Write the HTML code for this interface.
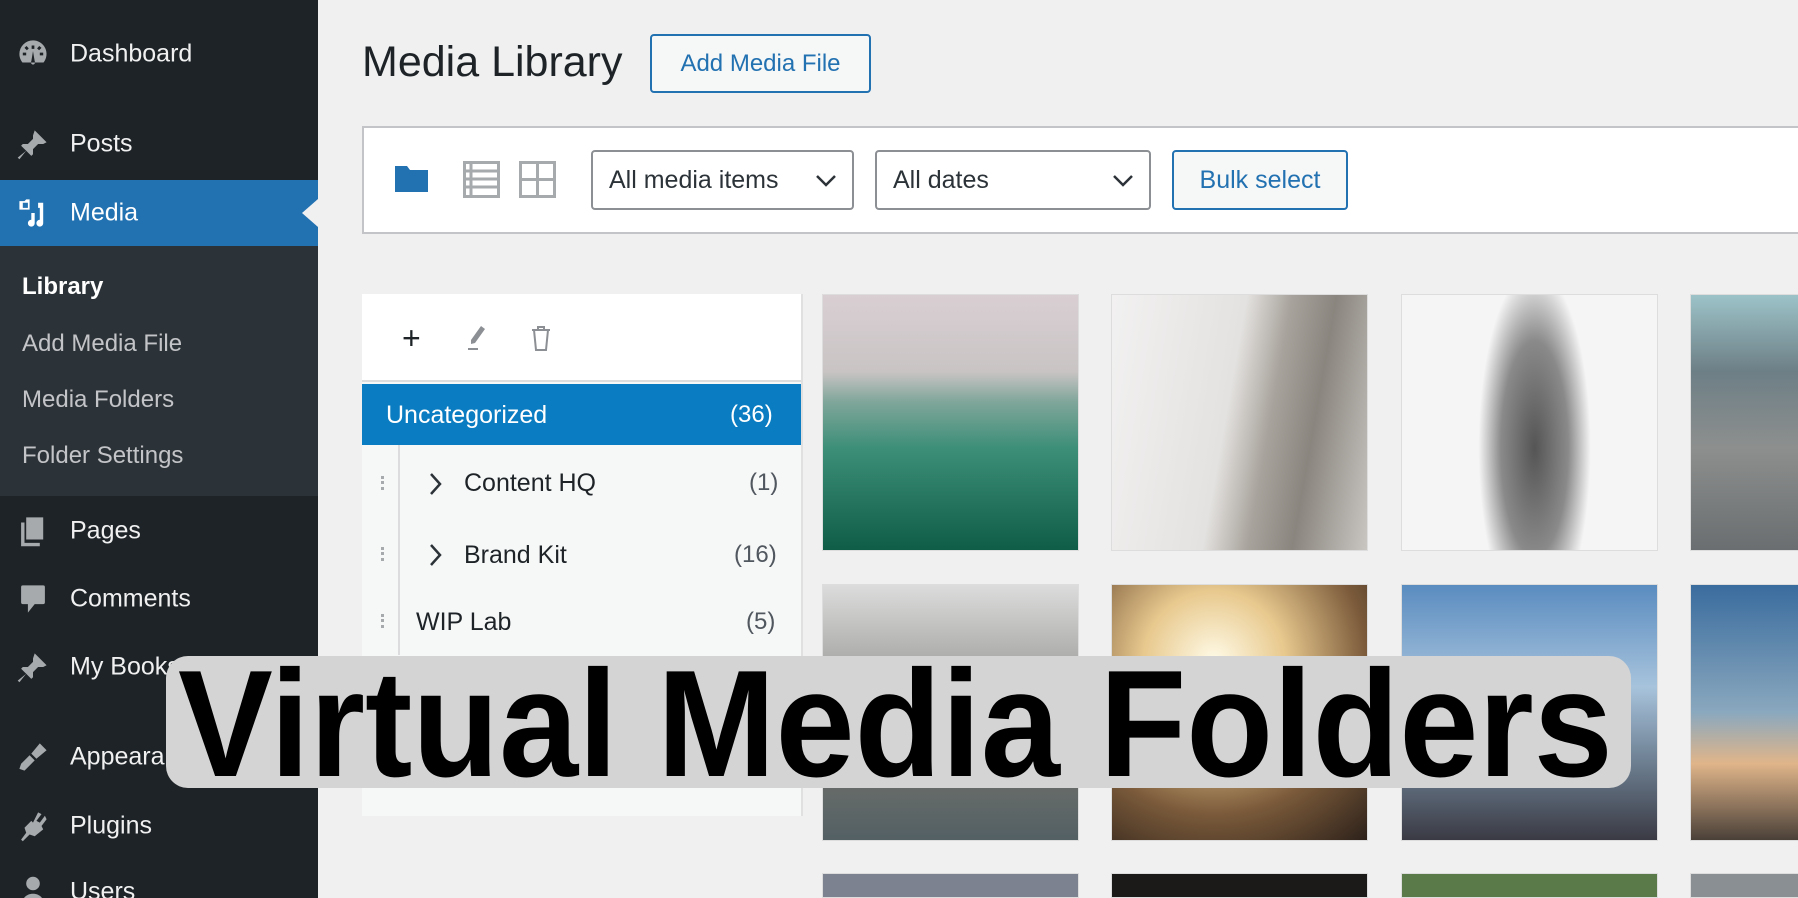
<!DOCTYPE html>
<html><head><meta charset="utf-8"><style>
*{margin:0;padding:0;box-sizing:border-box}
html,body{width:1798px;height:898px;overflow:hidden}
body{background:#f0f0f1;font-family:"Liberation Sans",sans-serif;position:relative}
.sb{position:absolute;left:0;top:0;width:318px;height:898px;background:#1d2327}
.it{position:absolute;left:70px;color:#f0f0f1;font-size:25px;transform:translateY(-50%)}
.ic{position:absolute;left:16px;width:34px;height:34px;transform:translateY(-50%)}
.sub{position:absolute;left:0;top:246px;width:318px;height:250px;background:#2c3338}
.si{position:absolute;left:22px;color:#c3c4c7;font-size:24px;transform:translateY(-50%)}
.abs{position:absolute}
.img{position:absolute;width:257px;height:257px;border:1px solid #ddd}
</style></head><body>
<div class="sb">
 <svg class="ic" style="top:54px" viewBox="0 0 20 20"><path fill="#a7aaad" d="M10 2a8 8 0 0 0-8 8c0 2 .7 3.6 1.8 5h12.4A8 8 0 0 0 10 2zm-.8 3h1.6v2H9.2zM5 6.4l1.2-1.1 1.3 1.4-1.1 1.1zM4 10.8v-1.6h2v1.6zm5 3.5 1-6 1 6a1.2 1.2 0 1 1-2 0zm5-5.1h2v1.6h-2zm-1.6-2.5 1.3-1.4L15 6.4l-1.4 1.4z"/></svg>
 <div class="it" style="top:54px">Dashboard</div>
 <svg class="ic" style="top:144px" viewBox="0 0 20 20"><path fill="#a7aaad" d="M11 2l7 7-2 1-3 0-3 3v3l-1 1-3-3-4 5-1-1 5-4-3-3 1-1h3l3-3V5z"/></svg>
 <div class="it" style="top:144px">Posts</div>
 <div class="abs" style="left:0;top:180px;width:318px;height:66px;background:#2271b1"></div>
 <div class="abs" style="left:302px;top:199px;width:0;height:0;border-top:14px solid transparent;border-bottom:14px solid transparent;border-right:16px solid #f0f0f1"></div>
 <svg class="ic" style="top:213px" viewBox="0 0 20 20"><path fill="#fff" d="M2 3h3l1-1h2v6H2zm2 1v3h3V4zm9 0h3v12a2 2 0 1 1-2-2V7h-1zM9 10h2v6a2 2 0 1 1-2-2z"/></svg>
 <div class="it" style="top:213px;color:#fff">Media</div>
 <div class="sub"></div>
 <div class="si" style="top:287px;color:#fff;font-weight:bold">Library</div>
 <div class="si" style="top:344px">Add Media File</div>
 <div class="si" style="top:400px">Media Folders</div>
 <div class="si" style="top:456px">Folder Settings</div>
 <svg class="ic" style="top:531px" viewBox="0 0 20 20"><path fill="#a7aaad" d="M6 2h10v13H6zM3 5h2v12h9v2H3z"/></svg>
 <div class="it" style="top:531px">Pages</div>
 <svg class="ic" style="top:599px" viewBox="0 0 20 20"><path fill="#a7aaad" d="M4 2h12a1 1 0 0 1 1 1v9a1 1 0 0 1-1 1h-5l-4 5v-5H4a1 1 0 0 1-1-1V3a1 1 0 0 1 1-1z"/></svg>
 <div class="it" style="top:599px">Comments</div>
 <svg class="ic" style="top:667px" viewBox="0 0 20 20"><path fill="#a7aaad" d="M11 2l7 7-2 1-3 0-3 3v3l-1 1-3-3-4 5-1-1 5-4-3-3 1-1h3l3-3V5z"/></svg>
 <div class="it" style="top:667px">My Books</div>
 <svg class="ic" style="top:757px" viewBox="0 0 20 20"><path fill="#a7aaad" d="M14 2l4 4-6 5-3-3zM8 9l3 3-4 4-2 2-3-1 1-3z"/></svg>
 <div class="it" style="top:757px">Appearance</div>
 <svg class="ic" style="top:826px" viewBox="0 0 20 20"><path fill="#a7aaad" d="M13 2l2 1-3 4 2 1 3-4 1 2-3 4 1 2-5 4-3-1-4 4-1-1 3-4-1-3 4-4 1 1z"/></svg>
 <div class="it" style="top:826px">Plugins</div>
 <svg class="ic" style="top:892px" viewBox="0 0 20 20"><circle cx="10" cy="5" r="4" fill="#a7aaad"/><path fill="#a7aaad" d="M3 19c0-5 3-8 7-8s7 3 7 8z"/></svg>
 <div class="it" style="top:892px">Users</div>
</div>

<div class="abs" style="left:362px;top:38px;font-size:43px;color:#1d2327">Media Library</div>
<div class="abs" style="left:650px;top:34px;width:221px;height:59px;border:2px solid #2271b1;border-radius:4px;background:#f6f7f7;color:#2271b1;font-size:24px;line-height:55px;text-align:center">Add Media File</div>

<div class="abs" style="left:362px;top:126px;width:1440px;height:108px;background:#fff;border:2px solid #c3c4c7"></div>
<svg class="abs" style="left:393px;top:164px" width="37" height="30" viewBox="0 0 37 30"><path fill="#2271b1" d="M2 2h12l3 4h18v22H2z"/></svg>
<svg class="abs" style="left:463px;top:161px" width="37" height="37" viewBox="0 0 37 37"><rect x="1.5" y="1.5" width="34" height="34" fill="none" stroke="#a7aaad" stroke-width="3"/><path stroke="#a7aaad" stroke-width="3" d="M2 10h33M2 18h33M2 26h33M8 2v33"/></svg>
<svg class="abs" style="left:519px;top:161px" width="37" height="37" viewBox="0 0 37 37"><rect x="1.5" y="1.5" width="34" height="34" fill="none" stroke="#a7aaad" stroke-width="3"/><path stroke="#a7aaad" stroke-width="3" d="M18.5 2v33M2 18.5h33"/></svg>
<div class="abs" style="left:591px;top:150px;width:263px;height:60px;border:2px solid #8c8f94;border-radius:4px;background:#fff;font-size:25px;color:#2c3338;line-height:56px;padding-left:16px">All media items</div>
<svg class="abs" style="left:815px;top:174px" width="22" height="14" viewBox="0 0 22 14"><path d="M2 2l9 9 9-9" fill="none" stroke="#2c3338" stroke-width="2.5"/></svg>
<div class="abs" style="left:875px;top:150px;width:276px;height:60px;border:2px solid #8c8f94;border-radius:4px;background:#fff;font-size:25px;color:#2c3338;line-height:56px;padding-left:16px">All dates</div>
<svg class="abs" style="left:1112px;top:174px" width="22" height="14" viewBox="0 0 22 14"><path d="M2 2l9 9 9-9" fill="none" stroke="#2c3338" stroke-width="2.5"/></svg>
<div class="abs" style="left:1172px;top:150px;width:176px;height:60px;border:2px solid #2271b1;border-radius:4px;background:#f6f7f7;font-size:25px;color:#2271b1;line-height:56px;text-align:center">Bulk select</div>

<div class="abs" style="left:362px;top:294px;width:441px;height:522px;background:#f6f7f7;border-right:2px solid #e0e0e0"></div>
<div class="abs" style="left:362px;top:294px;width:439px;height:88px;background:#fff;border-bottom:2px solid #ddd"></div>
<div class="abs" style="left:402px;top:320px;font-size:32px;color:#1d2327">+</div>
<svg class="abs" style="left:465px;top:325px" width="24" height="26" viewBox="0 0 24 26"><path fill="#8c8f94" d="M16 1l4 3-10 14-4 1 0-4z"/><rect x="3" y="23" width="10" height="2" fill="#8c8f94"/></svg>
<svg class="abs" style="left:530px;top:324px" width="22" height="28" viewBox="0 0 22 28"><path d="M2 6h18M8 6V3h6v3M4 6l2 20h10l2-20" fill="none" stroke="#8c8f94" stroke-width="2"/></svg>
<div class="abs" style="left:362px;top:384px;width:439px;height:61px;background:#0a7cc1"></div>
<div class="abs" style="left:386px;top:401px;font-size:25px;color:#fff">Uncategorized</div>
<div class="abs" style="left:730px;top:401px;font-size:24px;color:#fff">(36)</div>
<div class="abs" style="left:398px;top:445px;width:2px;height:210px;background:#dcdcde"></div>
<div class="abs" style="left:464px;top:469px;font-size:25px;color:#1d2327">Content HQ</div>
<div class="abs" style="left:749px;top:469px;font-size:24px;color:#50575e">(1)</div>
<div class="abs" style="left:464px;top:541px;font-size:25px;color:#1d2327">Brand Kit</div>
<div class="abs" style="left:734px;top:541px;font-size:24px;color:#50575e">(16)</div>
<div class="abs" style="left:416px;top:608px;font-size:25px;color:#1d2327">WIP Lab</div>
<div class="abs" style="left:746px;top:608px;font-size:24px;color:#50575e">(5)</div>
<svg class="abs" style="left:428px;top:472px" width="14" height="24" viewBox="0 0 14 24"><path d="M3 2l9 10-9 10" fill="none" stroke="#2c3338" stroke-width="2.5"/></svg>
<svg class="abs" style="left:428px;top:543px" width="14" height="24" viewBox="0 0 14 24"><path d="M3 2l9 10-9 10" fill="none" stroke="#2c3338" stroke-width="2.5"/></svg>
<div class="abs" style="left:381px;top:476px;width:3px;height:14px;border-left:3px dotted #a7aaad"></div>
<div class="abs" style="left:381px;top:547px;width:3px;height:14px;border-left:3px dotted #a7aaad"></div>
<div class="abs" style="left:381px;top:614px;width:3px;height:14px;border-left:3px dotted #a7aaad"></div>

<div class="img" style="left:822px;top:294px;background:linear-gradient(180deg,#d9cfd3 0%,#c9c4c4 30%,#7fa69a 42%,#3d8f78 60%,#0f5d47 100%)"></div>
<div class="img" style="left:1111px;top:294px;background:linear-gradient(100deg,#f2f1f1 0%,#e4e2e0 45%,#a8a39c 60%,#8a857e 75%,#c9c6c2 100%)"></div>
<div class="img" style="left:1401px;top:294px;background:radial-gradient(ellipse 22% 70% at 52% 60%,#555 0%,#8a8a8a 60%,#f5f5f5 100%)"></div>
<div class="img" style="left:1690px;top:294px;width:120px;background:linear-gradient(180deg,#9cc3c8 0%,#6d7f86 30%,#8d8f8e 60%,#6a6e70 100%)"></div>
<div class="img" style="left:822px;top:584px;background:linear-gradient(180deg,#dcdcdc 0%,#9a9b97 40%,#6f706b 70%,#536064 100%)"></div>
<div class="img" style="left:1111px;top:584px;background:radial-gradient(circle at 40% 30%,#fffbe8 0%,#e8c98e 30%,#7a5a3a 65%,#2d211a 100%)"></div>
<div class="img" style="left:1401px;top:584px;background:linear-gradient(180deg,#5a8cc0 0%,#a7c3dc 40%,#6c7e90 70%,#3a3a44 100%)"></div>
<div class="img" style="left:1690px;top:584px;width:120px;background:linear-gradient(180deg,#3a6c9e 0%,#8aa8be 50%,#e0b58a 70%,#4a4038 100%)"></div>
<div class="img" style="left:822px;top:873px;height:25px;background:#7c8290"></div>
<div class="img" style="left:1111px;top:873px;height:25px;background:#1c1a18"></div>
<div class="img" style="left:1401px;top:873px;height:25px;background:#5a7a4a"></div>
<div class="img" style="left:1690px;top:873px;height:25px;width:120px;background:#8a8f94"></div>

<div class="abs" style="left:166px;top:656px;width:1465px;height:132px;background:#d4d4d4;border-radius:22px"></div>
<div class="abs" style="left:178px;top:636px;font-size:152px;font-weight:bold;color:#000;line-height:176px;white-space:nowrap;transform:scaleX(0.935);transform-origin:0 0">Virtual Media Folders</div>
</body></html>
